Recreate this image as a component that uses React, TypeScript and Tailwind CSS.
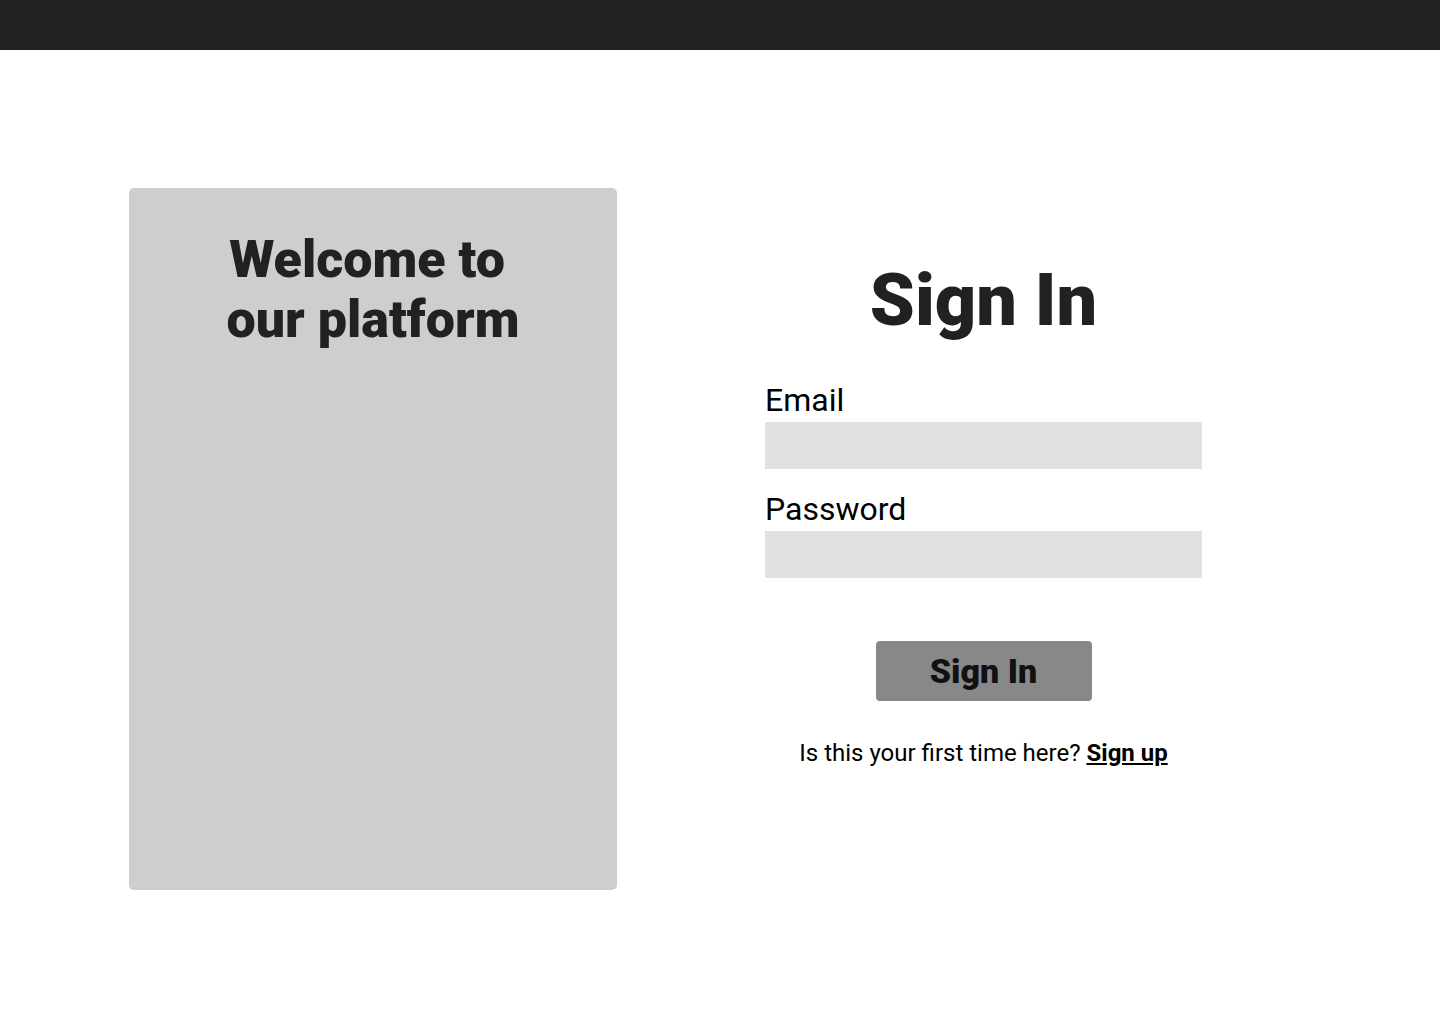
import React, { useState } from 'react';

export default function App() {
  const [email, setEmail] = useState('');
  const [password, setPassword] = useState('');

  return (
    <div className="min-h-screen bg-white flex flex-col font-['Roboto',sans-serif]">
      {/* Top bar */}
      <div className="h-[50px] bg-[#212121]"></div>

      {/* Main */}
      <div className="flex-1 flex items-start pt-[138px] pl-[129px]">
        {/* Welcome card */}
        <div className="w-[488px] h-[702px] bg-[#cecece] rounded-[5px] pt-[42px] flex justify-center">
          <h2 className="w-[320px] text-center text-[52px] leading-[60px] font-black text-[#212121]">
            <span className="block pr-[12px]">Welcome to</span>
            <span className="block">our platform</span>
          </h2>
        </div>

        {/* Sign in form */}
        <form
          className="ml-[148px] w-[437px] flex flex-col pt-[75px]"
          onSubmit={(e) => e.preventDefault()}
        >
          <h1 className="text-center text-[72px] leading-[76px] font-black text-[#212121]">Sign In</h1>

          <label className="mt-[43px] text-[32px] leading-[36px] text-black">Email</label>
          <input
            type="email"
            value={email}
            onChange={(e) => setEmail(e.target.value)}
            className="mt-1 h-[47px] w-full bg-[#e1e1e1] px-3 text-lg outline-none"
          />

          <label className="mt-[22px] text-[32px] leading-[36px] text-black">Password</label>
          <input
            type="password"
            value={password}
            onChange={(e) => setPassword(e.target.value)}
            className="mt-1 h-[47px] w-full bg-[#e1e1e1] px-3 text-lg outline-none"
          />

          <button
            type="submit"
            className="mt-[63px] self-center w-[216px] h-[60px] bg-[#888888] rounded-[4px] text-[34px] leading-[60px] font-black text-[#111111]"
          >
            Sign In
          </button>

          <p className="mt-[36px] text-center text-[24px] leading-[32px] text-black">
            Is this your first time here?{' '}
            <a href="#" className="font-bold underline">Sign up</a>
          </p>
        </form>
      </div>
    </div>
  );
}
